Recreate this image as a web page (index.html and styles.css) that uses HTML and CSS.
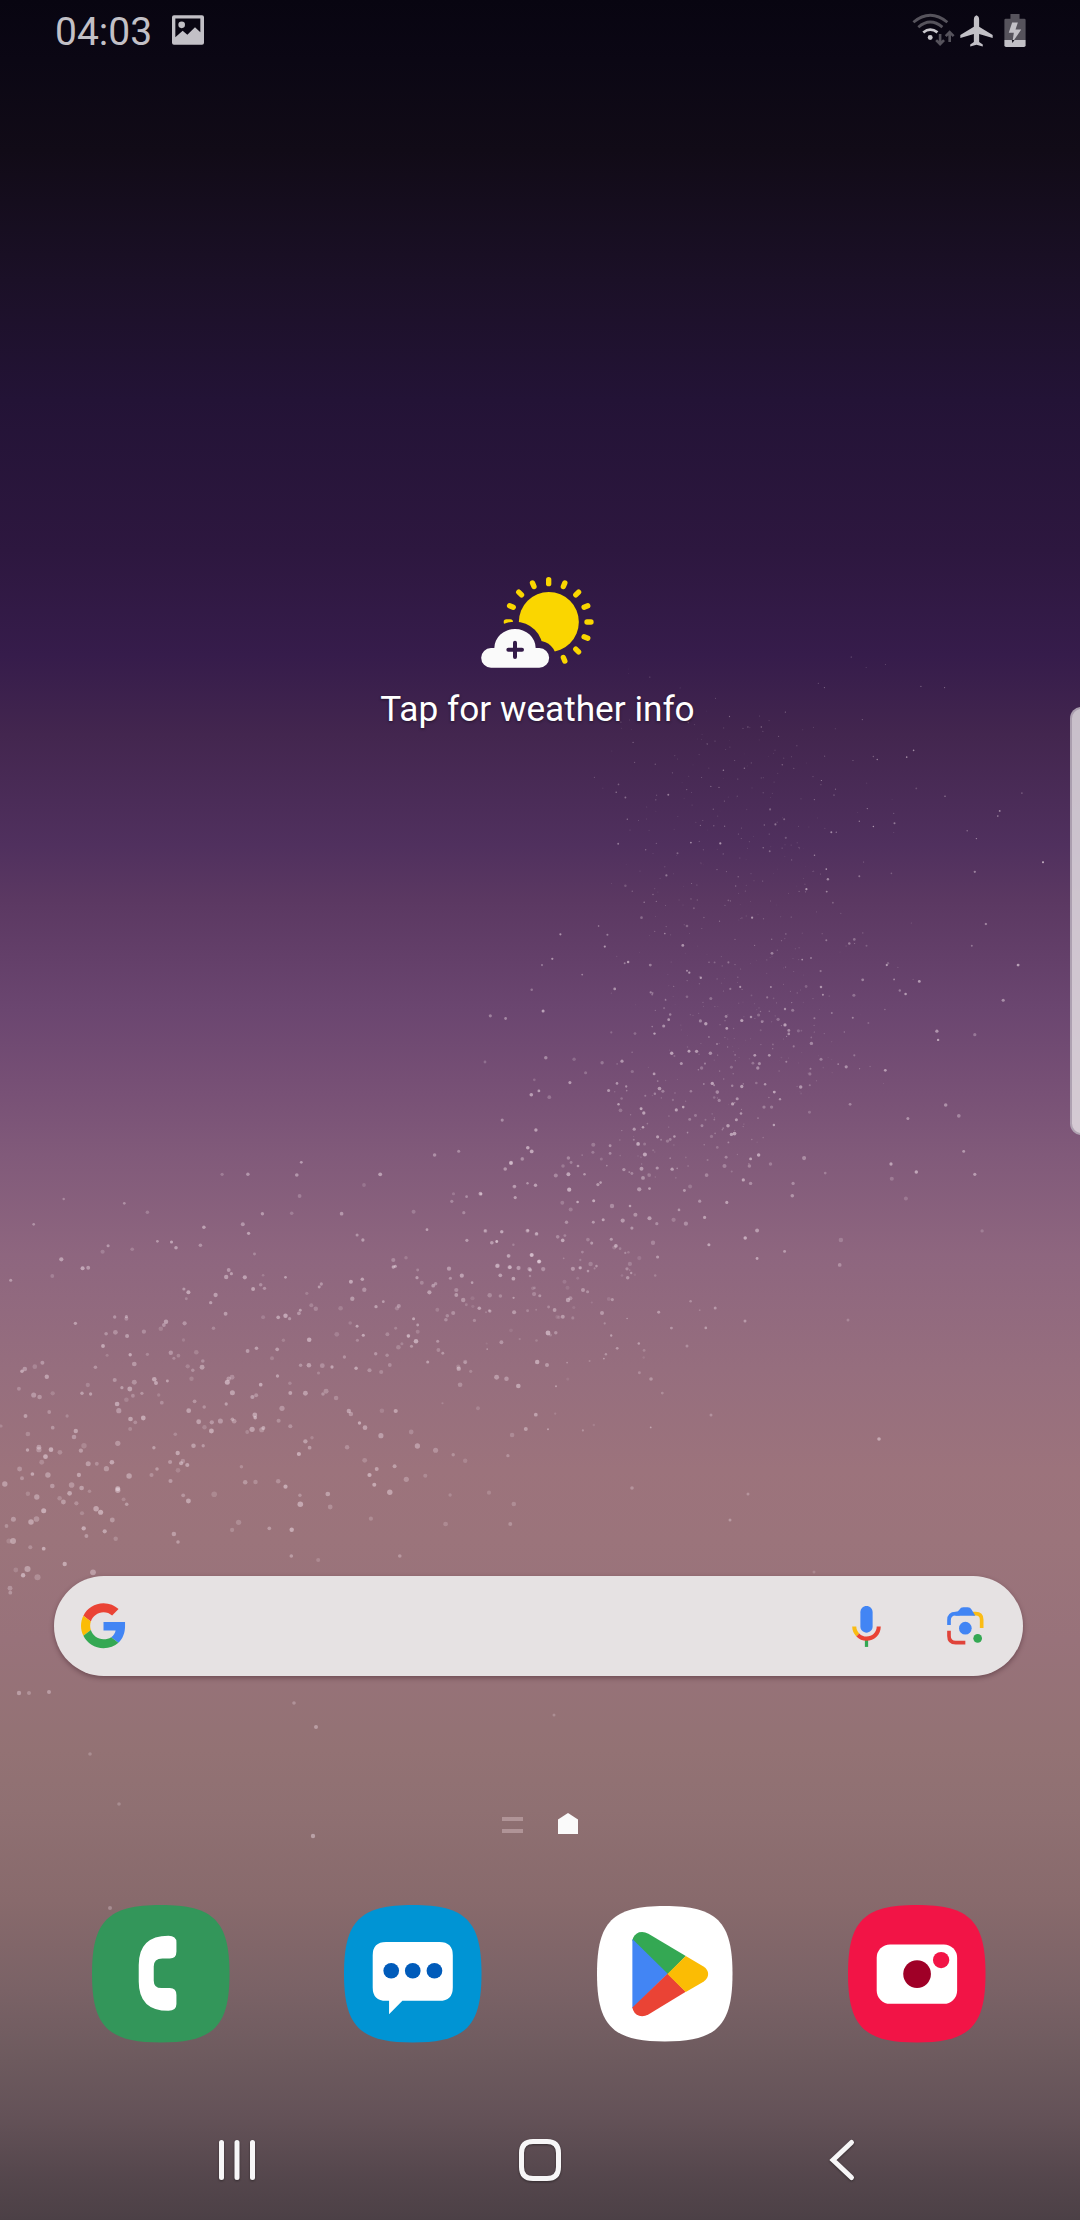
FILE: index.html
```html
<!DOCTYPE html>
<html lang="en">
<head>
<meta charset="utf-8">
<title>Home screen</title>
<link rel="stylesheet" href="styles.css">
</head>
<body>
<main class="screen">
  <svg class="dust" id="dust" viewBox="0 0 1080 2220" aria-hidden="true"></svg>

  <header class="status">
    <span class="clock">04:03</span>
    <svg class="status-photo" viewBox="516 47 96 89"><path fill-rule="evenodd" d="M522 47h84q6 0 6 6v77q0 6-6 6h-84q-6 0-6-6V53q0-6 6-6zM526 57v56l22-19 14 12 23-23 16 15V57z"/><circle cx="545" cy="76" r="10"/></svg>
    <div class="status-right">
      <svg class="status-wifi" viewBox="94 38 128 100" fill="none" stroke-width="8.500">
        <path class="dim" d="M97 66Q148 24 200 66M112 81Q148 50 185 81"/>
        <path class="lit" d="M127 97Q148 80 170 97"/>
        <circle cx="148" cy="112" r="7.5" class="dot"/>
        <path class="dim" stroke-width="8" d="M178 102v30M166 120l12 12 12-12M207 126V96M195 108l12-12 12 12"/>
      </svg>
      <svg class="status-plane" viewBox="238 44 100 96"><path d="M288 44q-8 3-8 13v22l-41 25v9l41-12v24l-11 8v6l19-5 19 5v-6l-11-8v-24l41 12v-9l-41-25V57q0-10-8-13z"/></svg>
      <svg class="status-battery" viewBox="371 43 65 98">
        <path class="shell" d="M390 43h27v14h14q4 0 4 4v59h-63V61q0-4 4-4h14z"/>
        <path d="M372 120h63v16q0 5-5 5h-53q-5 0-5-5z"/>
        <path d="M395 68h17l-7 21h17l-26 38 4-28h-15z"/>
        <path class="bolt-tip" d="M394 120h8l-6 9z"/>
      </svg>
    </div>
  </header>

  <section class="weather">
    <svg class="weather-icon" viewBox="360 75 345 285">
      <defs>
        <mask id="cloud-gap">
          <rect x="360" y="75" width="345" height="285" fill="#fff"/>
          <circle cx="465" cy="299" r="84"/>
          <circle cx="537" cy="324" r="51"/>
        </mask>
      </defs>
      <g mask="url(#cloud-gap)" fill="#fad600">
        <circle cx="566.5" cy="216" r="90"/>
        <g stroke="#fad600" stroke-width="16" stroke-linecap="round">
          <path d="M566 89v12"/>
          <path transform="rotate(22.5 566 216)" d="M566 89v12"/>
          <path transform="rotate(45 566 216)" d="M566 89v12"/>
          <path transform="rotate(67.5 566 216)" d="M566 89v12"/>
          <path transform="rotate(90 566 216)" d="M566 89v12"/>
          <path transform="rotate(112.5 566 216)" d="M566 89v12"/>
          <path transform="rotate(135 566 216)" d="M566 89v12"/>
          <path transform="rotate(157.5 566 216)" d="M566 89v12"/>
          <path transform="rotate(-22.5 566 216)" d="M566 89v12"/>
          <path transform="rotate(-45 566 216)" d="M566 89v12"/>
          <path transform="rotate(-67.5 566 216)" d="M566 89v12"/>
          <path transform="rotate(-90 566 216)" d="M566 89v12"/>
        </g>
      </g>
      <path fill="#fafafa" d="M393 353a29.500 29.500 0 0 1 0-59h10a62 57 0 0 1 124 0h11a29.500 29.500 0 0 1 0 59z"/>
      <path d="M465 278v43M445 299h41" stroke="#341b49" stroke-width="12" stroke-linecap="round"/>
    </svg>
    <p class="weather-text">Tap for weather info</p>
  </section>

  <section class="search">
    <svg class="google" viewBox="0 0 48 48">
      <path fill="#ea4335" d="M24 9.500c3.540 0 6.710 1.220 9.210 3.600l6.850-6.850C35.900 2.380 30.470 0 24 0 14.620 0 6.510 5.380 2.560 13.220l7.980 6.190C12.430 13.720 17.740 9.500 24 9.500z"/>
      <path fill="#4285f4" d="M46.980 20H24v9.020h12.940c-.580 2.960-2.260 5.480-4.780 7.180l7.730 6c4.510-4.180 7.090-10.360 7.090-17.650z"/>
      <path fill="#fbbc05" d="M10.530 28.590c-.480-1.450-.760-2.990-.760-4.590s.270-3.140.760-4.590l-7.980-6.190C.920 16.460 0 20.120 0 24c0 3.880.920 7.540 2.560 10.780l7.970-6.190z"/>
      <path fill="#34a853" d="M24 48c6.480 0 11.930-2.130 15.890-5.810l-7.730-6c-2.150 1.450-4.920 2.300-8.160 2.300-6.260 0-11.570-4.220-13.470-9.910l-7.980 6.190C6.510 42.620 14.620 48 24 48z"/>
    </svg>
    <svg class="mic" viewBox="0 0 24 24">
      <path fill="#4285f4" d="M12 15c1.660 0 3-1.310 3-2.970V5.010C15 3.350 13.660 2 12 2S9 3.340 9 5.010v7.020C9 13.690 10.340 15 12 15z"/>
      <path fill="#34a853" d="M11.200 18.080h1.600V22h-1.600z"/>
      <path fill="#f9bc15" d="M7.050 16.870C5.780 15.540 5 14.040 5 12h2c0 1.450.560 2.420 1.470 3.380z"/>
      <path fill="#ea4335" d="M12 16.930a4.970 5.250 0 0 1-3.540-1.550l-1.410 1.490C8.310 18.210 10.070 19 12 19c3.870 0 6.990-2.920 6.990-7H17c0 2.920-2.240 4.930-5 4.930z"/>
    </svg>
    <svg class="lens" viewBox="440 142 111 114" fill="none" stroke-width="11">
      <path stroke="#fbbc15" d="M517 162h9q18 0 18 18v25"/>
      <path stroke="#4285f4" d="M446 196v-14q0-20 20-20h12"/>
      <path fill="#4285f4" d="M465 157q8 0 12-7 4-7 12-7h13q8 0 12 7l11 18h-60z"/>
      <path stroke="#e0433a" d="M446 213v16q0 20 20 20h29"/>
      <circle cx="495" cy="205.500" r="19" fill="#4285f4"/>
      <circle cx="532" cy="236" r="13" fill="#34a853"/>
    </svg>
  </section>

  <div class="pages">
    <span class="page-feed"></span>
    <svg class="page-home" viewBox="0 0 20 21"><path d="M10 0l10 6.500V21H0V6.500z"/></svg>
  </div>

  <nav class="dock">
    <svg class="app" viewBox="0 0 412 412">
      <path fill="#33965a" d="M0 206C0 48 48 0 206 0S412 48 412 206 364 412 206 412 0 364 0 206z"/>
      <path fill="#fff" d="M229 92q24 0 24 20v27q0 21-20 21h-22q-26 0-26 24v42q0 23 23 23h25q20 0 20 21v27q0 20-24 20-89 0-89-88v-49q0-88 89-88z"/>
    </svg>
    <svg class="app" viewBox="0 0 412 412">
      <path fill="#0094d4" d="M0 206C0 48 48 0 206 0S412 48 412 206 364 412 206 412 0 364 0 206z"/>
      <path fill="#fff" d="M126 111h160q40 0 40 40v96q0 40-40 40H175l-40 40v-40h-9q-40 0-40-40v-96q0-40 40-40z"/>
      <g fill="#005bba"><circle cx="141.500" cy="197" r="23.500"/><circle cx="206" cy="197" r="23.500"/><circle cx="271" cy="197" r="23.500"/></g>
    </svg>
    <svg class="app" viewBox="0 0 412 412">
      <path fill="#fff" d="M3 206C3 50 50 3 206 3S409 50 409 206 362 409 206 409 3 362 3 206z"/>
      <path fill="#34a853" d="M109 107q3-18 20-25 14-4 28 4l112 67-55 56z"/>
      <path fill="#4285f4" d="M109 102l106 104-106 104z"/>
      <path fill="#ea4335" d="M109 307q3 18 20 25 14 4 28-4l112-68-54-55z"/>
      <path fill="#fbbc04" d="M269 153l53 31q14 9 14 23t-14 23l-53 31-55-54z"/>
    </svg>
    <svg class="app" viewBox="0 0 412 412">
      <path fill="#f21446" d="M0 206C0 48 48 0 206 0S412 48 412 206 364 412 206 412 0 364 0 206z"/>
      <rect x="86" y="118" width="241" height="178" rx="40" fill="#fff"/>
      <circle cx="207" cy="207" r="41.500" fill="#9f0027"/>
      <circle cx="279" cy="165" r="24.500" fill="#f21446"/>
    </svg>
  </nav>

  <footer class="nav">
    <svg class="nav-icon" viewBox="0 0 44 44"><path d="M6.500 4.500v35M22 4.500v35M37.500 4.500v35"/></svg>
    <svg class="nav-icon" viewBox="0 0 44 44"><path d="M15 3.500h14Q40.500 3.500 40.500 15v14Q40.500 40.500 29 40.500H15Q3.500 40.500 3.500 29V15Q3.500 3.500 15 3.500z"/></svg>
    <svg class="nav-icon" viewBox="0 0 44 44"><path d="M31.500 4.500L13 22l18.500 17.500"/></svg>
  </footer>

  <div class="edge-handle"></div>
</main>
<script src="dust.js"></script>
</body>
</html>
```
FILE: styles.css
```css
* { box-sizing: border-box; }
body { margin: 0; background: #000; }

.screen {
  position: relative;
  display: flex;
  flex-direction: column;
  width: 1080px;
  height: 2220px;
  overflow: hidden;
  font-family: Roboto, sans-serif;
  background: linear-gradient(180deg,
    #080511 0, #0b0714 60px, #110b17 150px, #1b1027 280px, #231336 400px,
    #2d173f 550px, #361c4b 655px, #43264f 735px, #50305e 845px, #5b3862 900px,
    #6b4670 1010px, #764f75 1080px, #815a7a 1155px, #8e667f 1255px,
    #966e7e 1370px, #9c737c 1470px, #9b747b 1540px, #98727a 1640px,
    #937274 1750px, #8f7072 1810px, #886a6c 1900px, #7a6266 1990px,
    #6d5a5e 2060px, #645258 2115px, #54464c 2180px, #4c4046 2220px);
}

/* The dust lies under everything else on the screen. */
.dust { position: absolute; inset: 0; width: 1080px; height: 2220px; }
.status, .weather, .search, .pages, .dock, .nav { position: relative; flex: none; }

.status {
  display: flex;
  align-items: flex-start;
  height: 66px;
  padding: 0 54px 0 55px;
  color: #c2c0c6;
  fill: #c2c0c6;
}
.clock { font-size: 39px; line-height: 46px; padding-top: 9px; width: 117px; }
.status-photo { width: 32px; height: 30px; margin-top: 15px; }
.status-right { display: flex; margin-left: auto; }
.status-wifi { width: 43px; height: 33px; margin: 13px 5px 0 0; }
.status-wifi .dim { stroke: #56535c; }
.status-wifi .lit { stroke: #c9c7cc; }
.status-wifi .dot { fill: #c9c7cc; }
.status-plane { width: 33px; height: 32px; margin: 15px 11px 0 0; }
.status-battery { width: 22px; height: 33px; margin-top: 14px; }
.status-battery .shell { fill: #56535c; }
.status-battery .bolt-tip { fill: #18151f; }

.weather {
  display: flex;
  flex-direction: column;
  align-items: center;
  height: 1510px;
  padding: 509px 5px 0 0;
}
.weather-icon { width: 115px; height: 95px; }
.weather-text {
  margin: 18px 0 0;
  color: #fff;
  font-size: 35.200px;
  line-height: 42px;
  white-space: nowrap;
  text-shadow: 0 1px 3px rgba(0, 0, 0, .45);
}

.search {
  display: flex;
  align-items: center;
  width: 969px;
  height: 100px;
  margin-left: 53.500px;
  padding: 0 39px 0 27px;
  border-radius: 50px;
  background: rgba(238, 238, 238, .9);
  box-shadow: 0 2px 5px rgba(50, 20, 30, .4);
}
.google { width: 45px; height: 45.500px; }
.mic { width: 49px; height: 49px; margin-left: auto; margin-right: 56px; }
.lens { width: 37px; height: 38px; }

.pages {
  display: flex;
  justify-content: flex-start;
  align-items: flex-start;
  height: 92px;
  margin-top: 137px;
  padding-left: 502px;
  gap: 35px;
}
.page-feed {
  width: 21px;
  height: 16px;
  margin-top: 4px;
  border: solid #b09497;
  border-width: 4px 0;
}
.page-home { width: 20px; height: 21px; fill: #fafafa; }

.dock {
  display: flex;
  justify-content: space-between;
  height: 190px;
  padding: 0 94.500px 0 92px;
}
.app { width: 137.500px; height: 137.500px; overflow: visible; }

.nav {
  display: flex;
  justify-content: space-between;
  height: 125px;
  padding: 43px 216px 0 215px;
}
.nav-icon {
  width: 44px;
  height: 44px;
  overflow: visible;
  fill: none;
  stroke: #f7f6f7;
  stroke-width: 5;
  stroke-linecap: round;
  filter: drop-shadow(0 1px 1px rgba(0, 0, 0, .4));
}

/* Edge panel handle, hanging over the right side of the screen. */
.edge-handle {
  position: absolute;
  top: 707px;
  right: -13px;
  width: 23px;
  height: 428px;
  border: 2px solid rgba(150, 135, 155, .6);
  border-radius: 14px;
  background: rgba(235, 231, 234, .8);
}
```
FILE: dust.js
```js
const dust = document.getElementById("dust");

function speck(x, y, r, alpha) {
  const c = document.createElementNS("http://www.w3.org/2000/svg", "circle");
  c.setAttribute("cx", x.toFixed(1));
  c.setAttribute("cy", y.toFixed(1));
  c.setAttribute("r", r.toFixed(2));
  c.setAttribute("fill", "#efdfe8");
  c.setAttribute("fill-opacity", alpha.toFixed(2));
  dust.appendChild(c);
}

// Hand-placed grains: "x,y" in field units. The radius runs from r0 at the top
// of a field to r1 at its bottom.
const fields = [
  { x: 0, y: 1150, sx: 2.904, sy: 3, h: 1400, r0: 1.7, r1: 2.9, a: 0.4, points:
    "185,147 361,160 428,187 875,37 862,75 645,73 720,73 1104,73 1057,105 870,138 762,191 847,190 992,191 592,232 705,223 722,250 98,223 " +
    "240,355 256,353 178,328 298,305 314,287 384,298 457,274 498,276 511,293 582,286 739,312 152,378 31,391 664,360 672,371 657,381 711,382 735,417 757,404 768,415 829,382 " +
    "1240,239 1201,185 1347,188 1395,131 1355,140 1312,154 1317,131 1332,4 1262,15 1484,39 1516,27 1356,271 1409,242 1428,278 1442,275 1457,245 1476,318 1505,354 1491,386 1544,315 1565,335 " +
    "1054,270 1037,255 1142,330 1148,349 1142,351 1179,323 1213,360 1211,383 1304,356 1308,385 1371,398 1341,377 1265,401 1258,407 1225,398 1247,427 1325,420 1325,435 1345,450 1354,464 1422,436 1392,475 " +
    "1019,395 1052,388 1058,419 1023,446 989,475 1113,455 1092,470 1153,475 1158,468 1270,479 1299,497 1316,489 1295,509 1201,506 1213,525 1213,545 1186,558 1186,557 1149,535 1055,556 1017,519 978,553 " +
    "927,411 933,402 891,430 904,466 917,476 872,481 868,490 841,506 829,497 808,502 764,502 655,491 626,435 612,458 547,427 541,446 534,417 536,520 482,515 476,525 467,536 533,570 " +
    "333,501 367,506 367,500 219,520 308,551 335,547 369,558 418,545 299,588 311,616 378,614 428,613 496,608 518,617 505,625 570,607 589,633 587,652 560,661 545,649 390,642 " +
    "277,652 136,680 101,650 123,638 72,657 64,664 55,716 115,741 153,730 98,735 255,705 238,730 263,732 333,690 390,697 354,713 377,717 386,737 412,730 367,749 340,762 345,782 " +
    "448,688 453,699 486,693 461,735 470,758 556,686 565,754 593,771 660,697 664,686 674,682 675,728 657,762 744,736 733,741 757,704 806,678 842,700 843,729 819,775 887,730 " +
    "947,724 938,732 976,744 1000,621 1091,611 1124,616 1107,666 1132,645 1157,592 1195,589 1208,574 1167,581 1242,636 1273,600 1286,610 1271,574 1351,637 1351,636 1367,664 1331,650 1332,656 1336,704 1388,775 " +
    "1442,682 1471,686 1505,708 1456,577 1013,783 1019,792 1109,782 1149,783 1044,819 1060,833 1106,857 1194,846 1212,888 1265,901 1316,914 1351,932 1235,977 1180,988 1146,949 1059,931 1094,957 1073,975 1087,1004 1132,1027 " +
    "1307,1035 1420,1028 1492,1062 1294,1122 1482,1122 1077,1106 1487,855 1475,917 1008,892 906,863 887,874 899,893 868,912 843,829 809,812 765,834 760,839 732,838 718,846 740,795 741,803 675,808 680,814 640,813 " +
    "615,817 614,843 577,815 594,832 548,782 562,887 590,887 509,853 447,893 516,909 531,933 526,940 544,945 517,961 494,936 456,957 440,975 495,993 416,804 393,817 379,807 378,837 342,880 " +
    "325,937 309,956 281,941 256,941 229,975 235,902 244,887 215,861 220,843 195,798 143,786 74,798 81,852 153,833 3,828 148,899 174,907 132,920 113,892 113,899 121,937 80,900 57,957 64,985 " +
    "94,972 139,975 152,1008 14,1002 81,1031 107,1041 173,1045 184,1056 202,1030 208,1005 237,1014 260,1024 222,1060 238,1090 279,1076 342,1021 342,1016 359,1048 368,1063 375,978 292,1087 326,1110 " +
    "243,1135 251,1158 304,1144 336,1166 39,1108 90,1116 106,1107 127,1082 19,1128 26,1173 38,1173 88,1192 127,1196 46,1260 80,1257 67,1276 109,1282 188,1242 270,1267 29,1315 30,1328 " +
    "701,950 712,997 742,996 622,1033 532,1036 547,1053 505,1152 517,1176 693,1117 674,1140 782,1135 847,1139 846,1218 924,1230 1161,1218 871,1036 872,1063 952,1032 959,1071 808,994 829,1010 " +
    "719,603 745,595 790,625 805,598 823,571 898,569 620,535 764,376 873,646 897,646 925,669 936,647 964,651 1034,655 1073,661 1038,571 1037,529 1125,553 1527,837 1556,794 " +
    "1555,106 1532,100 1494,109 1467,57 1532,242 1558,252 1479,352 1444,348 1453,376 1540,360 1560,636" },
  { x: 480, y: 650, sx: 2.613, sy: 2.529, h: 1568, r0: 0.5, r1: 2.2, a: 0.45, points:
    "1059,37 1009,44 970,18 884,84 900,95 1152,92 1214,95 999,176 1133,254 1115,271 1028,269 1038,277 828,242 790,290 798,157 615,122 730,167 735,195 636,304 691,299 603,345 492,366 540,353 " +
    "404,284 458,289 299,322 362,340 356,360 380,373 385,428 361,490 461,489 551,487 573,484 628,489 516,514 795,428 799,475 772,441 758,403 757,509 740,500 892,330 925,367 929,352 1012,401 1081,413 " +
    "1083,438 1028,446 991,433 1140,350 1215,370 1416,362 1358,407 1353,420 1273,457 1297,477 1471,537 1471,537 1322,693 1322,693 1285,748 1293,561 1406,797 1066,792 1063,797 1082,833 1148,838 1097,861 1112,870 1075,565 991,572 " +
    "918,461 931,461 874,519 905,554 909,580 922,639 853,605 906,611 905,734 1010,748 965,742 978,732 1000,834 977,873 1015,943 974,930 978,1025 957,1054 1059,1063 1197,986 1194,964 1293,973 1367,886 " +
    "380,596 398,610 452,618 422,677 487,570 429,638 310,698 333,720 326,750 210,719 189,781 162,797 135,859 165,913 267,821 352,857 378,792 387,789 445,797 483,717 530,747 541,698 559,653 649,633 711,677 " +
    "799,718 763,767 842,783 865,779 890,812 852,851 891,852 896,872 760,852 680,852 654,857 649,790 613,790 541,811 547,816 577,829 603,881 541,877 446,866 450,871 481,906 497,922 493,935 480,951 " +
    "576,938 590,945 728,923 708,928 684,937 737,940 779,934 797,908 817,911 797,948 832,963 807,962 807,971 866,995 891,1035 862,1072 838,1105 756,1025 718,1025 713,1045 726,1057 730,1046 643,927 645,957 " +
    "405,970 343,967 456,970 501,1020 546,1015 566,1015 602,1020 588,1046 579,1057 526,1046 657,1055 371,1040 398,1066 319,1044 246,1035 172,1031 276,1069 235,1094 154,1115 181,1131 142,1087 134,1125 13,1042 " +
    "27,925 67,932 58,1189 146,1214 125,1259 135,1268 81,1297 111,1287 382,1104 358,1096 336,1114 370,1134 362,1149 367,1164 421,1160 428,1171 469,1109 478,1116 457,1122 455,1072 504,1138 513,1163 531,1156 548,1187 " +
    "551,1116 607,1096 612,1132 625,1139 620,1118 684,1104 659,1102 672,1135 660,1148 682,1172 670,1188 648,1203 657,1225 665,1223 722,1095 745,1098 769,1118 784,1136 762,1156 742,1156 768,1201 861,1169 967,1149 " +
    "1217,1151 1251,1178 1118,1185 1264,1268 1293,1326 1074,1300 1076,1337 1140,1320 1113,1387 1312,1469 847,1285 902,1323 818,1349 816,1380 707,1287 728,1277 704,1305 759,1300 688,1340 707,1349 643,1283 639,1305 620,1258 " +
    "605,1230 580,1203 563,1177 508,1230 490,1242 497,1238 464,1231 403,1212 426,1207 413,1249 430,1249 431,1276 422,1312 463,1310 502,1313 376,1314 397,1324 426,1335 442,1328 416,1364 443,1362 340,1254 340,1273 " +
    "296,1251 295,1270 231,1285 238,1296 217,1305 256,1305 198,1329 231,1326 273,1326 317,1287 308,1352 315,1347 233,1365 215,1398 255,1396 297,1393 237,1415 226,1447 296,1447 322,1441 345,1406 392,1406 406,1428 " +
    "373,1443 397,1462 443,1437 462,1451 506,1441 520,1416 534,1367 549,1357 574,1394 587,1435 592,1328 538,1451 452,1499 464,1535 598,1504 693,1487 724,1468 724,1539 796,1521 943,1492 940,1555 645,1397 " +
    "282,1491 292,1500 355,1507 343,1490 384,1565 289,1553 216,1493 203,1484 148,1476 125,1468 57,1471 31,1499 44,1496 75,1532 135,1530 155,1546 78,1561 101,1563 46,1557 14,1469 92,1385 90,1357 3,1376" }
];

// Small deterministic generator so the finer dust always falls the same way.
let seed = 20177;
function rnd() {
  seed = (seed * 1664525 + 1013904223) % 4294967296;
  return seed / 4294967296;
}

fields.forEach((f) => {
  f.points.split(" ").forEach((p) => {
    const [x, y] = p.split(",").map(Number);
    const r = f.r0 + (f.r1 - f.r0) * (y / f.h);
    speck(f.x + x / f.sx, f.y + y / f.sy, r * (0.65 + 0.45 * rnd()), f.a * (0.45 + 0.9 * rnd()));
  });
});

// Scatters grains round the line from (x0,y0) to (x1,y1).
function scatter(n, x0, y0, x1, y1, width, r, alpha) {
  for (let i = 0; i < n; i++) {
    const t = rnd();
    const off = (rnd() + rnd() + rnd() - 1.5) * width;
    speck(x0 + (x1 - x0) * t + off, y0 + (y1 - y0) * t + off * 0.3, r * (0.6 + 0.6 * rnd()), alpha * (0.3 + rnd()));
  }
}
scatter(320, 745, 700, 745, 1060, 120, 0.6, 0.28);
scatter(130, 790, 1000, 640, 1180, 90, 0.9, 0.3);
scatter(45, 610, 1240, 500, 1330, 60, 1.8, 0.35);
scatter(45, 640, 1270, 540, 1440, 110, 1.3, 0.35);

// Stray grains below the cloud: x, y, radius, opacity.
[[19, 1693, 2.2, 0.4], [29, 1693, 2, 0.3], [49, 1692, 2, 0.4], [294, 1703, 1.800, 0.3], [316, 1727, 2, 0.4],
 [90, 1754, 1.800, 0.25], [119, 1804, 1.800, 0.25], [313, 1836, 2.2, 0.45], [110, 1908, 2, 0.3], [554, 1715, 1.500, 0.25],
 [879, 1439, 1.800, 0.5], [711, 1415, 1.500, 0.3], [730, 1520, 1.500, 0.35], [632, 1488, 1.800, 0.3], [748, 1494, 1.500, 0.3],
 [745, 1321, 1.500, 0.4], [848, 1320, 1.500, 0.25], [651, 1379, 1.800, 0.35], [687, 1346, 1.500, 0.3], [814, 1572, 1.500, 0.2],
 [548, 1333, 2.4, 0.55], [568, 1300, 2.2, 0.45], [547, 1365, 2, 0.4], [602, 1313, 2, 0.4], [583, 1290, 2, 0.4]]
  .forEach(([x, y, r, a]) => speck(x, y, r, a));
```
